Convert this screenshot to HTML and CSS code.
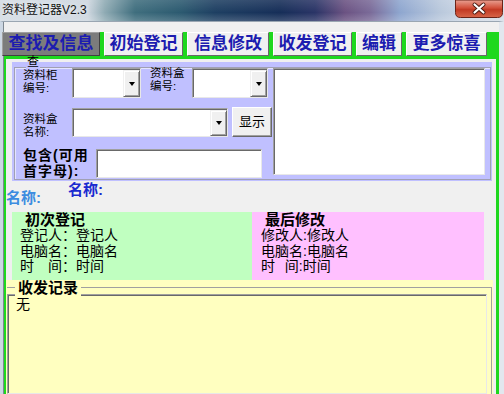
FILE: index.html
```html
<!DOCTYPE html>
<html lang="zh-CN">
<head>
    <meta charset="UTF-8">
    <title>资料登记器V2.3</title>
    <link rel="stylesheet" href="styles.css">
</head>
<body>
    <div class="titlebar">
        <span class="title">资料登记器V2.3</span>
        <svg class="close" width="48" height="18" viewBox="0 0 48 18">
            <defs>
                <linearGradient id="red" x1="0" y1="0" x2="0" y2="1">
                    <stop offset="0" stop-color="#e9a193"/>
                    <stop offset="0.45" stop-color="#d2503a"/>
                    <stop offset="0.55" stop-color="#c23a24"/>
                    <stop offset="1" stop-color="#d8664a"/>
                </linearGradient>
            </defs>
            <path d="M0.5 0 V12.5 Q0.5 17.5 5.5 17.5 H42.5 Q47.5 17.5 47.5 12.5 V0 Z" fill="url(#red)" stroke="#6b2418"/>
            <path d="M19.5 4.5 L28.5 12.5 M28.5 4.5 L19.5 12.5" stroke="#4a1a12" stroke-width="4" stroke-linecap="round"/>
            <path d="M19.5 4.5 L28.5 12.5 M28.5 4.5 L19.5 12.5" stroke="#fff" stroke-width="2.2" stroke-linecap="round"/>
        </svg>
    </div>
    <div class="frame">
        <div class="tabctl">
            <div class="tabrow">
                <div class="tab active w1">查找及信息</div>
                <div class="tab w2">初始登记</div>
                <div class="tab w3">信息修改</div>
                <div class="tab w2">收发登记</div>
                <div class="tab w5">编辑</div>
                <div class="tab w6">更多惊喜</div>
            </div>
            <div class="page">
                <div class="search">
                    <div class="group">
                        <span class="legend">查</span>
                        <div class="fields">
                            <div class="row row1">
                                <div class="lbl l1">资料柜<br>编号:</div>
                                <div class="combo c1"><span class="drop"></span></div>
                                <div class="lbl l2">资料盒<br>编号:</div>
                                <div class="combo c2"><span class="drop"></span></div>
                            </div>
                            <div class="row row2">
                                <div class="lbl l3">资料盒<br>名称:</div>
                                <div class="combo c3"><span class="drop"></span></div>
                                <div class="btn">显示</div>
                            </div>
                            <div class="row row3">
                                <div class="blbl">包含(可用<br>首字母):</div>
                                <div class="input"></div>
                            </div>
                        </div>
                        <div class="listbox"></div>
                    </div>
                </div>
                <div class="names">
                    <span class="nm1">名称:</span>
                    <span class="nm2">名称:</span>
                </div>
                <div class="info">
                    <div class="first">
                        <h3>初次登记</h3>
                        <p>登记人：登记人</p>
                        <p>电脑名：电脑名</p>
                        <p>时　间：时间</p>
                    </div>
                    <div class="last">
                        <h3>最后修改</h3>
                        <p>修改人:修改人</p>
                        <p>电脑名:电脑名</p>
                        <p>时&ensp;&thinsp;间:时间</p>
                    </div>
                </div>
                <div class="log">
                    <div class="loggroup">
                        <span class="loglabel">收发记录</span>
                        <div class="logbox">无</div>
                    </div>
                </div>
            </div>
        </div>
    </div>
</body>
</html>
```

FILE: styles.css
```css
* {
    box-sizing: border-box;
}

html,
body {
    margin: 0;
    padding: 0;
    overflow: hidden;
}

body {
    width: 504px;
    height: 394px;
    font-family: "Liberation Sans", "Noto Sans CJK SC", sans-serif;
    font-size: 12px;
    color: #000;
    background: #f0f0f0;
}

/* 标题栏 */
.titlebar {
    height: 21px;
    display: flex;
    align-items: flex-start;
    background:
        linear-gradient(to bottom, rgba(255, 255, 255, 0.12), rgba(255, 255, 255, 0) 60%, rgba(255, 255, 255, 0.18)),
        linear-gradient(to right, #d3dbe3 0, #cdd6df 88px, #8eaab3 105px, #3f6e7e 135px, #2c5a70 180px, #1e3f62 215px, #162e58 280px, #2a3466 315px, #6b5282 345px, #7a6a98 370px, #8ea6cf 400px, #b9c8dc 440px, #cfd9e5 470px, #d5dde7 504px);
}

.title {
    margin: 3px 0 0 2px;
    font-size: 12px;
    line-height: 14px;
    color: #111;
    text-shadow: 0 0 5px #fff;
}

.close {
    display: block;
    margin-left: auto;
    margin-right: 1px;
}

/* 窗口 */
.frame {
    height: 373px;
    display: flex;
    flex-direction: column;
    border-top: 1px solid #9aa6b2;
    border-left: 3px solid #cdd8e4;
    border-right: 5px solid #e2e7ee;
    box-shadow: inset 1px 0 #7d8790;
    padding: 10px 0 0 1px;
}

.tabctl {
    flex: 1;
    display: flex;
    flex-direction: column;
    background: #1ed81e;
    min-height: 0;
}

.tabrow {
    display: flex;
    gap: 4px;
    height: 27px;
    padding-bottom: 3px;
}

.tab {
    height: 24px;
    background: #f0f0f0;
    border: 1px solid;
    border-color: #fff #696969 #696969 #fff;
    color: #1c1cb0;
    font-weight: bold;
    font-size: 17px;
    line-height: 21px;
    text-align: center;
    white-space: nowrap;
}

.tab.active {
    background: #7c7c7c;
    border-color: #a0a0a0 #404040 #404040 #a0a0a0;
}

.w1 {
    width: 98px;
    margin-left: -2px;
}

.w2 {
    width: 79px;
}

.w3 {
    width: 82px;
}

.w5 {
    width: 46px;
}

.w6 {
    width: 81px;
}

.page {
    flex: 1;
    margin: 0 3px 0 2px;
    background: #f0f0f0;
    display: flex;
    flex-direction: column;
    min-height: 0;
}

/* 查找 */
.search {
    margin: 3px 4px 0 6px;
    height: 123px;
    background: #c0c0ff;
    padding: 5px 1px 1px 2px;
}

.group {
    position: relative;
    height: 100%;
    border: 1px solid #a0a0b4;
    box-shadow: inset 1px 1px #e4e4ff;
    display: flex;
    padding-left: 8px;
}

.legend {
    position: absolute;
    top: -12px;
    left: 11px;
    padding: 0 1px;
    font-size: 12px;
    line-height: 13px;
    background: linear-gradient(transparent 6px, #c0c0ff 6px);
}

.fields {
    width: 250px;
    display: flex;
    flex-direction: column;
}

.row {
    display: flex;
    align-items: flex-start;
}

.row2 {
    margin-top: 10px;
}

.row3 {
    margin-top: 11px;
}

.lbl {
    font-size: 11.5px;
    line-height: 12.5px;
    white-space: nowrap;
}

.l1 {
    width: 49px;
    margin-top: 1px;
}

.l2 {
    width: 42px;
    margin-left: 9px;
    margin-top: -1px;
}

.l3 {
    width: 49px;
    margin-top: 5px;
}

.combo,
.input,
.listbox,
.logbox {
    border: 1px solid;
    border-color: #a0a0a0 #e8e8e8 #e8e8e8 #a0a0a0;
    box-shadow: inset 1px 1px #696969;
    background: #fff;
}

.combo {
    display: flex;
    justify-content: flex-end;
    padding: 1px 0 0 1px;
    height: 30px;
}

.c1 {
    width: 69px;
}

.c2 {
    width: 76px;
}

.c3 {
    width: 156px;
    height: 29px;
}

.drop {
    width: 17px;
    height: 100%;
    background: #f0f0f0;
    border: 1px solid;
    border-color: #f0f0f0 #696969 #696969 #f0f0f0;
    box-shadow: inset 1px 1px #fff, inset -1px -1px #a0a0a0;
    display: flex;
    align-items: center;
    justify-content: center;
}

.drop::after {
    content: "";
    border-left: 3.5px solid transparent;
    border-right: 3.5px solid transparent;
    border-top: 4px solid #000;
}

.btn {
    width: 40px;
    height: 30px;
    margin-left: 4px;
    margin-top: -1px;
    background: #f0f0f0;
    border: 1px solid;
    border-color: #fff #696969 #696969 #fff;
    box-shadow: inset -1px -1px #a0a0a0;
    font-size: 13px;
    line-height: 27px;
    text-align: center;
}

.blbl {
    width: 73px;
    margin-top: -1px;
    font-size: 14px;
    font-weight: bold;
    line-height: 15.6px;
    letter-spacing: 1px;
    white-space: nowrap;
}

.input {
    width: 166px;
    height: 29px;
}

.listbox {
    width: 212px;
    height: 107px;
}

/* 名称 */
.names {
    display: flex;
    height: 33px;
    font-size: 15px;
    font-weight: bold;
    line-height: 16px;
}

.nm1 {
    width: 62px;
    margin-top: 9px;
    color: #3c8ce0;
}

.nm2 {
    margin-top: 1px;
    color: #1a2ad0;
}

/* 登记信息 */
.info {
    display: flex;
    height: 72px;
    margin-left: 6px;
}

.first {
    width: 240px;
    background: #c0ffc0;
    padding-left: 8px;
}

.last {
    width: 232px;
    background: #ffc0ff;
    padding-left: 9px;
}

.info h3 {
    margin: 0;
    padding-left: 5px;
    font-size: 15px;
    line-height: 16px;
    font-weight: bold;
}

.last h3 {
    padding-left: 4px;
}

.info p {
    margin: 0;
    font-size: 14px;
    line-height: 15.5px;
    white-space: nowrap;
}

/* 收发记录 */
.log {
    flex: 1;
    margin-right: 3px;
    background: #ffffc0;
    padding: 7px 1px 0 1px;
}

.loggroup {
    position: relative;
    height: 100%;
    border-top: 1px solid #a0a0a0;
    border-right: 1px solid #a0a0a0;
}

.loglabel {
    position: absolute;
    top: -8px;
    left: 8px;
    padding: 0 3px;
    background: #ffffc0;
    font-size: 15px;
    font-weight: bold;
    line-height: 16px;
}

.logbox {
    margin-top: 6px;
    width: 480px;
    height: 100px;
    background: #ffffc0;
    padding: 1px 8px;
    font-size: 14px;
    line-height: 16px;
}
```
